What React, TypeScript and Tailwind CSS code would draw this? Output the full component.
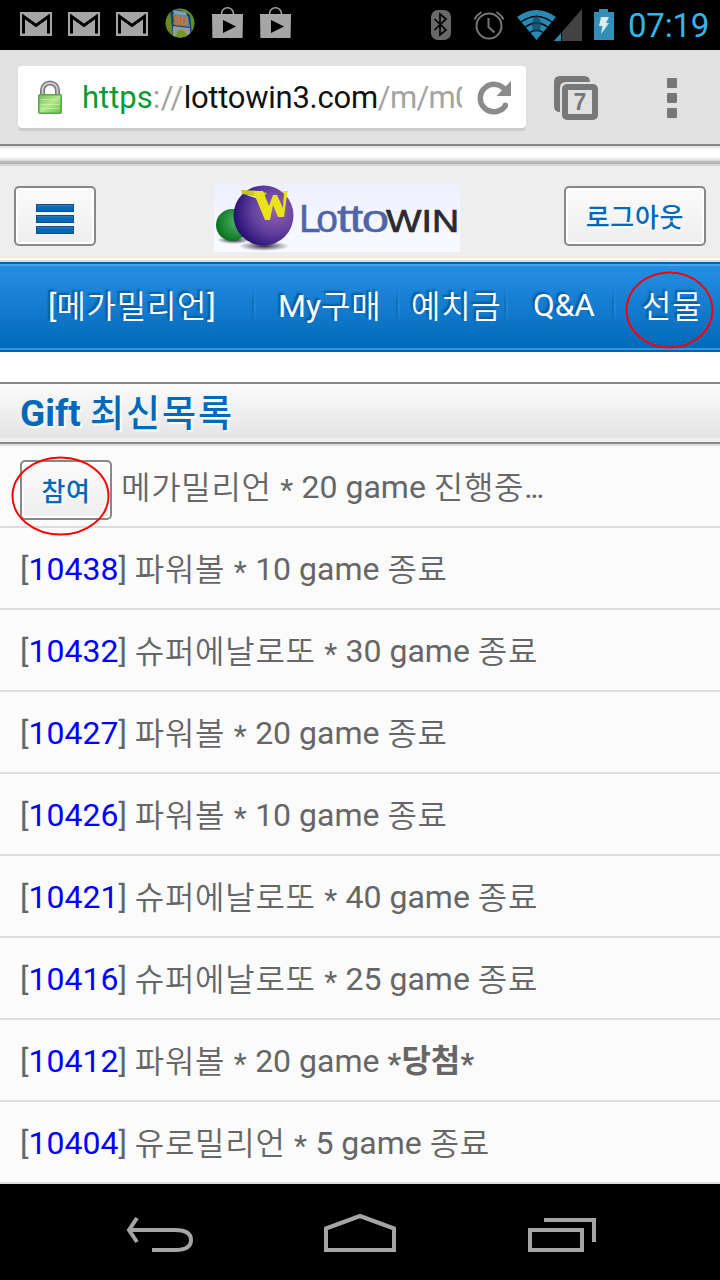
import type { ReactNode } from 'react';

interface Entry {
  id?: string;
  title: string;
  won?: boolean;
}

const entries: Entry[] = [
  { title: '메가밀리언 * 20 game 진행중...' },
  { id: '10438', title: '파워볼 * 10 game 종료' },
  { id: '10432', title: '슈퍼에날로또 * 30 game 종료' },
  { id: '10427', title: '파워볼 * 20 game 종료' },
  { id: '10426', title: '파워볼 * 10 game 종료' },
  { id: '10421', title: '슈퍼에날로또 * 40 game 종료' },
  { id: '10416', title: '슈퍼에날로또 * 25 game 종료' },
  { id: '10412', title: '파워볼 * 20 game ', won: true },
  { id: '10404', title: '유로밀리언 * 5 game 종료' },
];

// Hangul runs are lighter and a little wider than the latin text
function Mixed({ children }: { children: string }) {
  return (
    <>
      {children.split(/([가-힣]+|\*|\.{3})/).map((part, i) => {
        if (i % 2 === 0) return part;
        if (part === '*') return <Star key={i} />;
        if (part === '...') return <span key={i} className="tracking-[-2.500px]">{part}</span>;
        return <span key={i} className="relative top-px font-[350] tracking-[0.700px]">{part}</span>;
      })}
    </>
  );
}

function Star() {
  return <span className="relative top-0.5 inline-block w-[14px] text-center text-[30px] leading-none">*</span>;
}

function MailIcon() {
  return (
    <svg width="32" height="24" viewBox="0 0 32 24">
      <path d="M0 0h32v24H0z" fill="#a5a5a5" />
      <path d="M3.500 21.500V4.500L16 13.500 28.500 4.500v17" fill="none" stroke="#000" strokeWidth="3" />
    </svg>
  );
}

function PlayBagIcon() {
  return (
    <svg width="31" height="31" viewBox="0 0 31 31">
      <path d="M9.500 8V6.500a6 5.700 0 0 1 12 0V8" fill="none" stroke="#a5a5a5" strokeWidth="1.600" />
      <path d="M0 7h31l-.4 24H.4z" fill="#a5a5a5" />
      <path d="M11 13v13l13-6.500z" fill="#000" />
    </svg>
  );
}

function SdIcon() {
  return (
    <svg width="30" height="30" viewBox="0 0 30 30">
      <defs>
        <clipPath id="sd-clip"><circle cx="15" cy="15" r="14.500" /></clipPath>
      </defs>
      <g clipPath="url(#sd-clip)">
        <path d="M0 0h30v30H0z" fill="#648c20" />
        <path d="M5 1q12 0 20 6l2 20-19 1z" fill="#123f70" />
        <path d="M8 2l13 2 1 4-13-1z" fill="#7e9fac" />
        <path d="M8 6l15 2 2 11-16-2z" fill="#63839c" />
        <path d="M8 18l17 2v10H8z" fill="#969999" />
        <path d="M11 27q3-8 9-3l3 5H10z" fill="#71991d" />
        <text x="8" y="17" fontSize="12" fontWeight="bold" fill="#d86d15" stroke="#d86d15" strokeWidth=".5" fontFamily="Liberation Sans" transform="rotate(4 15 12)" textLength="14" lengthAdjust="spacingAndGlyphs">SD</text>
      </g>
    </svg>
  );
}

function StatusBar() {
  return (
    <div className="flex h-[50px] shrink-0 items-start bg-black">
      <div className="flex gap-4 pl-5 pt-3">
        <MailIcon />
        <MailIcon />
        <MailIcon />
      </div>
      <div className="ml-[17px] pt-2"><SdIcon /></div>
      <div className="ml-[17px] flex gap-[17px] pt-[7px]">
        <PlayBagIcon />
        <PlayBagIcon />
      </div>
      <svg className="ml-[139px]" width="190" height="50" viewBox="430 0 190 50">
        <rect x="431" y="10" width="20" height="30" rx="7" fill="#686868" />
        <path d="M434.500 19l11.500 11-6 5V14l6 5-11.500 11" fill="none" stroke="#000" strokeWidth="1.700" />
        <g fill="none" stroke="#777" strokeWidth="2">
          <circle cx="489" cy="26" r="12.500" />
          <path d="M488.500 18v9l6 5.500M474.500 19.500a18 18 0 0 1 7-7.500M503.500 19.500a18 18 0 0 0-7-7.500" />
        </g>
        <path d="M536.500 40L517 17q19.500-14 39 0z" fill="#2889b3" />
        <g fill="none" stroke="#000" strokeWidth="1.400">
          <path d="M521 22q15.500-11 31 0M525.500 27q11-8 22 0M530 32.500q6.500-5 13 0" />
        </g>
        <path d="M536.500 14l5 9-2 9h-6l-2-9z" fill="#124b63" opacity=".75" />
        <path d="M582 9v32h-28z" fill="#424242" />
        <path d="M561 33v8h-7z" fill="#2889b3" />
        <path d="M561.500 32v9" stroke="#000" />
        <path d="M594 12h5V9h9v3h6v28h-20z" fill="#338fb7" />
        <path d="M601 17h8l-3 6h3l-8 11 1.500-8H599z" fill="#ddebf2" />
      </svg>
      <div className="ml-2 pt-[7px] text-[33px] leading-[38px] tracking-[-0.200px] text-[#33b5e5]">07:19</div>
    </div>
  );
}

function BrowserBar() {
  return (
    <div className="flex h-24 shrink-0 items-start border-b-2 border-[#888] bg-[#e1e1e1] pl-[18px] pt-4">
      <div className="flex h-[62px] w-[508px] rounded bg-white shadow-[0_3px_1px_#ccc]">
        <svg className="ml-5 mt-3.5" width="24" height="35" viewBox="0 0 24 35">
          <defs>
            <linearGradient id="lock" x1="0" y1="0" x2="1" y2="1">
              <stop offset="0" stopColor="#76bd56" />
              <stop offset=".5" stopColor="#b4e98c" />
              <stop offset="1" stopColor="#62bd4d" />
            </linearGradient>
          </defs>
          <path d="M4.500 15v-5a7.500 7 0 0 1 15 0v5" fill="none" stroke="#77777b" strokeWidth="5" />
          <path d="M4.500 15v-5a7.500 7 0 0 1 15 0v5" fill="none" stroke="#c9c9cb" strokeWidth="2" />
          <rect x=".8" y="14.800" width="22.400" height="18.400" rx="1" fill="url(#lock)" stroke="#58a94c" strokeWidth="1.600" />
          <path d="M3 19.500h18M3 24.500h18M3 28.500h18" stroke="#d3f4bd" opacity=".6" />
        </svg>
        <div className="ml-5 w-[380px] overflow-hidden whitespace-nowrap text-[31px] leading-[63px] text-[#a3a3a3]">
          <span className="text-[#0b9b35]">https</span>
          <span className="tracking-[0.400px]">://</span>
          <span className="tracking-[-0.260px] text-[#111]">lottowin3.com</span>
          <span className="tracking-[-0.700px]">/m/m0</span>
        </div>
        <svg className="ml-[15px] mt-[15px]" width="36" height="36" viewBox="0 0 36 36">
          <path d="M28.500 24.500a13.700 13.700 0 1 1 .5-14" fill="none" stroke="#8b8b8b" strokeWidth="5.500" />
          <circle cx="28.300" cy="24.300" r="2.700" fill="#8b8b8b" />
          <path d="M34 0v15H19.500z" fill="#8b8b8b" />
        </svg>
      </div>
      <svg className="ml-7 mt-2.5" width="44" height="44" viewBox="0 0 44 44">
        <path d="M6 36q-6 0-6-6V6q0-6 6-6h24q6 0 6 6H12q-6 0-6 6z" fill="#777" />
        <rect x="11" y="11" width="30" height="30" rx="2" fill="#e1e1e1" stroke="#777" strokeWidth="6" />
        <text x="26" y="34" textAnchor="middle" fontSize="23" fontWeight="bold" fill="#777" fontFamily="Liberation Sans">7</text>
      </svg>
      <div className="ml-[69px] mt-3 flex flex-col gap-[5px]">
        <div className="size-2.5 rounded-[1px] bg-[#777]" />
        <div className="size-2.5 rounded-[1px] bg-[#777]" />
        <div className="size-2.5 rounded-[1px] bg-[#777]" />
      </div>
    </div>
  );
}

function Logo() {
  return (
    <svg width="246" height="68" viewBox="214 184 246 68">
      <defs>
        <linearGradient id="logo-bg" x1="0" y1="0" x2="0" y2="1">
          <stop stopColor="#eef0ff" />
          <stop offset="1" stopColor="#f9faff" />
        </linearGradient>
        <radialGradient id="purple" cx=".7" cy=".4" r=".7">
          <stop stopColor="#9560ae" />
          <stop offset=".55" stopColor="#6341a0" />
          <stop offset="1" stopColor="#281171" />
        </radialGradient>
        <radialGradient id="green" cx=".65" cy=".4" r=".65">
          <stop stopColor="#51b567" />
          <stop offset="1" stopColor="#087321" />
        </radialGradient>
        <radialGradient id="ball-shadow">
          <stop stopColor="#282838" />
          <stop offset="1" stopColor="#282838" stopOpacity="0" />
        </radialGradient>
      </defs>
      <path d="M214 184h246v68H214z" fill="url(#logo-bg)" />
      <ellipse cx="234" cy="240" rx="17" ry="4" fill="url(#ball-shadow)" />
      <ellipse cx="264" cy="246" rx="25" ry="5" fill="url(#ball-shadow)" />
      <circle cx="232" cy="225" r="16" fill="url(#green)" />
      <circle cx="263.500" cy="215.500" r="30" fill="url(#purple)" />
      <path d="M246 195l13 4 6 2v-5z" fill="#f6f4b8" />
      <path d="M241 190l18 1 8 2-3 4-22-3z" fill="#c9c91d" />
      <path d="M253 191h10l6 15 4-11h4l6 13 1-15-4-2h8l-1 4-3 22h-6l-5-12-3 15h-5z" fill="#e9e317" />
      <g fontFamily="Liberation Sans" fontSize="39">
        <text x="299" y="232" textLength="39" fill="#4f65a7" stroke="#4f65a7" strokeWidth=".5">Lo</text>
        <text x="337" y="232" textLength="51" fill="#4f65a7" stroke="#4f65a7" strokeWidth=".5" lengthAdjust="spacingAndGlyphs"><tspan letterSpacing="-1">tto</tspan></text>
        <text x="386" y="232" fontSize="32" textLength="73" lengthAdjust="spacingAndGlyphs" fill="#2a2a30" stroke="#2a2a30" strokeWidth=".7">WIN</text>
      </g>
    </svg>
  );
}

function Button({ className, children }: { className: string; children: ReactNode }) {
  return (
    <button
      className={`flex h-[60px] shrink-0 items-center justify-center rounded-[5px] border-2 border-[#888] bg-gradient-to-b from-[#fbfbfb] to-[#eee] text-[26px] text-[#0069b9] shadow-[inset_0_0_0_2px_#fff] [text-shadow:2px_2px_1px_#fff] ${className}`}
    >
      {children}
    </button>
  );
}

function MenuBar() {
  return <i className="h-2 w-[38px] border border-[#174b8a] bg-gradient-to-b from-[#2f7cba] to-[#0069b9] to-40%" />;
}

function SiteHeader() {
  return (
    <>
      <div className="h-5 shrink-0 bg-[linear-gradient(#e1e1e1_0,#fff_4px,#fff_10px,#e5e5e5_14px,#b5b5b5_16px,#b5b5b5_18px,#d4d4d4_18px)]" />
      <header className="flex h-24 shrink-0 items-start border-b-2 border-[#ddd] bg-[#eee] px-[14px] shadow-[inset_0_-2px_0_#fff]">
        <Button className="mt-5 w-[82px]">
          <span className="mt-1.5 flex flex-col gap-[3px]">
            <MenuBar />
            <MenuBar />
            <MenuBar />
          </span>
        </Button>
        <div className="ml-[118px] mt-[18px]"><Logo /></div>
        <Button className="ml-[104px] mt-5 w-[142px] pt-[5px] font-medium tracking-[0.700px]">로그아웃</Button>
      </header>
    </>
  );
}

function Divider() {
  return <div className="h-[38px] w-1 shrink-0 bg-gradient-to-r from-[#0b66ad] from-50% to-[#2b8fdb] to-50% opacity-60 [mask-image:linear-gradient(transparent,#000,transparent)]" />;
}

function NavBar() {
  return (
    <nav className="flex h-[90px] shrink-0 items-center border-y-2 border-[#0064b0] bg-gradient-to-b from-[#2490e5] to-[#0068b8] pb-[3px] text-[32px] leading-10 whitespace-nowrap text-white shadow-[inset_0_2px_0_#4ca2e7,inset_0_-2px_0_#3294df] [text-shadow:-2px_-2px_2px_#0a5593]">
      <div className="w-[252px] shrink-0 pl-12"><Mixed>[메가밀리언]</Mixed></div>
      <Divider />
      <div className="w-[140px] shrink-0 pl-[22px]"><Mixed>My구매</Mixed></div>
      <Divider />
      <div className="w-[104px] shrink-0 pl-[11px]"><Mixed>예치금</Mixed></div>
      <Divider />
      <div className="w-[104px] shrink-0 pl-[25px] text-[31.500px]">Q&amp;A</div>
      <Divider />
      <div className="relative w-[104px] shrink-0 pl-[26px]">
        <Mixed>선물</Mixed>
        <svg className="absolute -top-[15px] left-[9px]" width="90" height="78" viewBox="0 0 90 78">
          <ellipse cx="44.500" cy="39" rx="43" ry="37.500" fill="none" stroke="#ff0000" strokeWidth="2" />
        </svg>
      </div>
    </nav>
  );
}

function EntryRow({ entry }: { entry: Entry }) {
  return (
    <li className="flex h-[82px] shrink-0 items-center border-b-2 border-[#ddd] bg-[#fbfbfb] pl-5 text-[32px] whitespace-pre text-[#666]">
      {entry.id ? (
        <span className="pt-0.5">[<a className="text-[#0000ff]">{entry.id}</a>] </span>
      ) : (
        <span className="relative mr-[9px] mt-2">
          <Button className="w-[92px] pt-[5px] font-medium tracking-[0.500px]">참여</Button>
          <svg className="absolute -left-[9px] -top-[5px]" width="100" height="82" viewBox="0 0 100 82">
            <ellipse cx="49.500" cy="41" rx="48" ry="38.500" fill="none" stroke="#ff0000" strokeWidth="2" />
          </svg>
        </span>
      )}
      <span className="pt-0.5">
        <Mixed>{entry.title}</Mixed>
        {entry.won && <b><Star />당첨<Star /></b>}
      </span>
    </li>
  );
}

function SystemNav() {
  return (
    <div className="flex h-24 shrink-0 bg-black">
      <svg width="720" height="96" viewBox="0 1184 720 96" fill="none" stroke="#a5a5a5" strokeWidth="4">
        <path d="M130 1230h45c7 0 16 1 16 10s-9 10-16 10h-23" />
        <path d="M137 1218l-8 12 8 12" />
        <path d="M326 1250v-21.500l34-12.500 34 12.500V1250z" />
        <path d="M530 1230h52v20h-52zM544 1220h50v22" />
      </svg>
    </div>
  );
}

export default function App() {
  return (
    <div className="flex h-[1280px] w-[720px] flex-col overflow-hidden bg-white font-['Roboto','Noto_Sans_CJK_KR',sans-serif]">
      <StatusBar />
      <BrowserBar />
      <SiteHeader />
      <NavBar />
      <h2 className="mt-[30px] flex h-16 shrink-0 items-center whitespace-pre border-y-2 border-t-[#888] border-b-[#ddd] bg-gradient-to-b from-[#fbfbfb] to-[#e2e2e2] pl-5 text-[37px] font-bold text-[#0069b9] shadow-[inset_0_-2px_0_#888,inset_0_-6px_0_#eee] [text-shadow:2px_2px_1px_#fff]">
        Gift <span className="relative top-px font-medium tracking-[2px]">최신목록</span>
      </h2>
      <ul className="flex shrink-0 flex-col">
        {entries.map((entry) => (
          <EntryRow key={entry.id ?? 'open'} entry={entry} />
        ))}
      </ul>
      <SystemNav />
    </div>
  );
}
